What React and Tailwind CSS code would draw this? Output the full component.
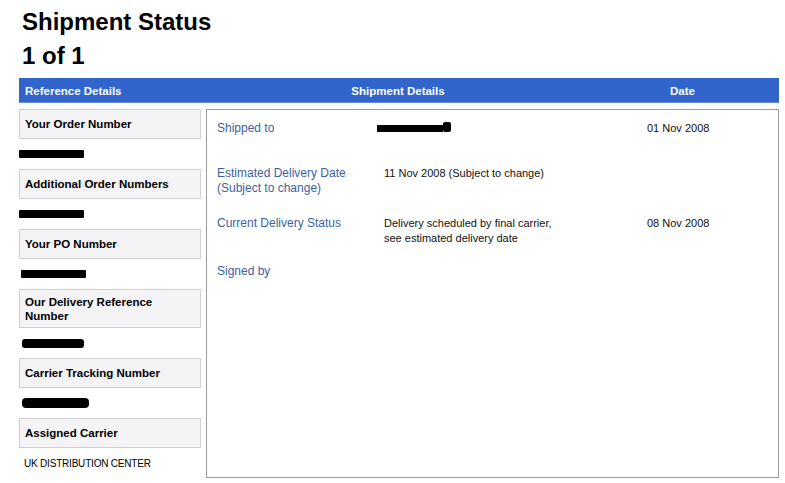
const font = { fontFamily: '"Liberation Sans", Arial, sans-serif' };

function RefBox({ children, tall }) {
  return (
    <div
      className={`flex items-center border border-[#d0d0d4] bg-[#f4f4f6] px-[5px] text-[11.5px] font-bold leading-[14px] text-black ${
        tall ? 'h-[39px]' : 'h-[30px]'
      }`}
    >
      {children}
    </div>
  );
}

function Redacted({ w, h = 8, ml = 0, round = 'rounded-[1px]' }) {
  return (
    <div className="flex h-[30px] items-center">
      <div className={`bg-black ${round}`} style={{ width: w, height: h, marginLeft: ml }} />
    </div>
  );
}

function DetailRow({ label, value, date, height }) {
  return (
    <div className="grid grid-cols-[167px_263px_1fr] items-start" style={{ height }}>
      <div className="text-[12px] leading-[15px] text-[#3d5fa3]">{label}</div>
      <div className="text-[11px] leading-[15px] text-[#111]">{value}</div>
      <div className="text-[11px] leading-[15px] text-[#111]">{date}</div>
    </div>
  );
}

export default function App() {
  return (
    <div className="min-h-[483px] w-[785px] bg-white pt-[5px]" style={font}>
      <div className="ml-[19px] w-[760px]">
        <div className="pl-[3px] text-[24px] font-bold leading-[34px] text-black">
          <div>Shipment Status</div>
          <div>1 of 1</div>
        </div>

        {/* header bar */}
        <div className="mt-[5px] grid h-[25px] grid-cols-[187px_384px_1fr] items-center border-b border-[#6688d8] bg-[#3265cb] pt-[3px] text-[11.5px] font-bold text-white">
          <div className="pl-[6px]">Reference Details</div>
          <div className="text-center">Shipment Details</div>
          <div className="pr-[4px] text-center">Date</div>
        </div>

        <div className="mt-[6px] flex gap-[5px]">
          {/* reference details */}
          <div className="flex w-[182px] flex-col">
            <RefBox>Your Order Number</RefBox>
            <Redacted w={65} />
            <RefBox>Additional Order Numbers</RefBox>
            <Redacted w={65} h={8} />
            <RefBox>Your PO Number</RefBox>
            <Redacted w={65} ml={2} />
            <RefBox tall>
              Our Delivery Reference
              <br />
              Number
            </RefBox>
            <Redacted w={62} h={9} ml={3} round="rounded-[3px]" />
            <RefBox>Carrier Tracking Number</RefBox>
            <Redacted w={67} h={10} ml={3} round="rounded-[4px]" />
            <RefBox>Assigned Carrier</RefBox>
            <div className="flex h-[30px] items-center pl-[5px] text-[10px] tracking-[-0.2px] text-black">
              UK DISTRIBUTION CENTER
            </div>
          </div>

          {/* shipment details */}
          <div className="h-[369px] flex-1 border border-[#9a9a9a] bg-white pl-[10px] pt-[11px]">
            <DetailRow
              height={45}
              label="Shipped to"
              value={
                <div className="-ml-[7px] mt-[1px] flex items-end">
                  <div className="h-[7px] w-[66px] bg-black" />
                  <div className="h-[10px] w-[8px] rounded-[2px] bg-black" />
                </div>
              }
              date="01 Nov 2008"
            />
            <DetailRow
              height={50}
              label={
                <>
                  Estimated Delivery Date
                  <br />
                  (Subject to change)
                </>
              }
              value="11 Nov 2008 (Subject to change)"
            />
            <DetailRow
              height={48}
              label="Current Delivery Status"
              value={
                <>
                  Delivery scheduled by final carrier,
                  <br />
                  see estimated delivery date
                </>
              }
              date="08 Nov 2008"
            />
            <DetailRow height={20} label="Signed by" />
          </div>
        </div>
      </div>
    </div>
  );
}
